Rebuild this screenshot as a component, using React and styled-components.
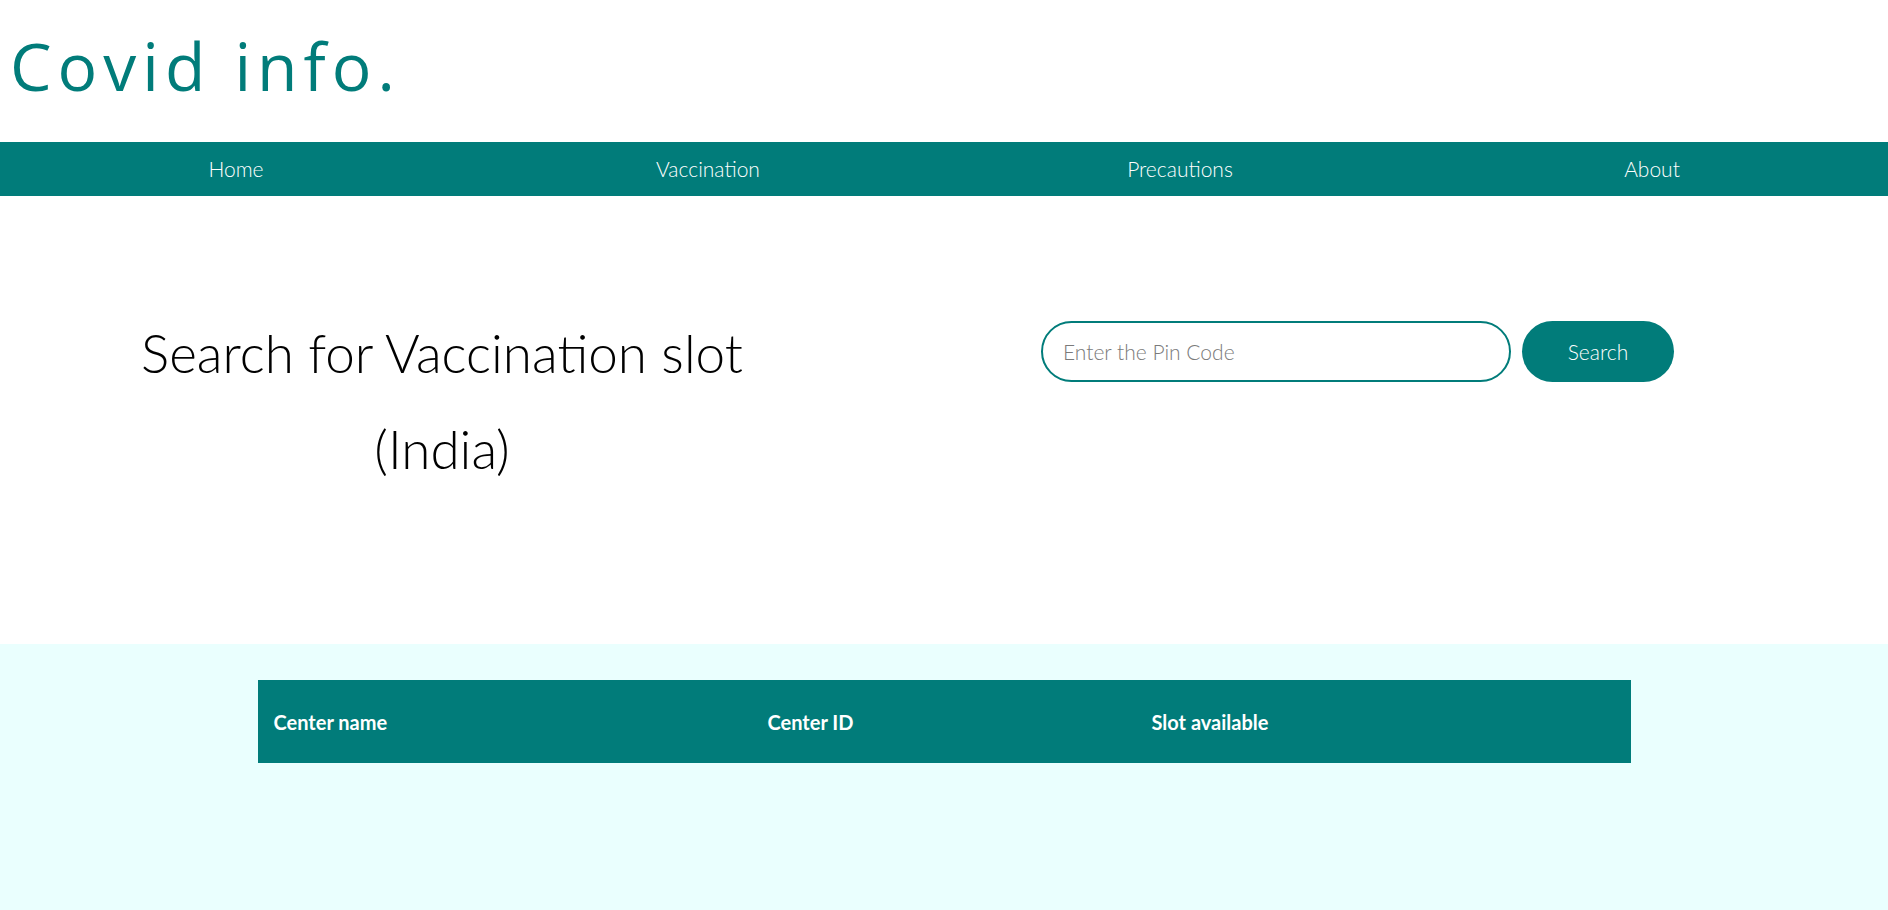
import styled, { createGlobalStyle } from "styled-components";

const teal = "#017c7a";

const GlobalStyle = createGlobalStyle`
  * { box-sizing: border-box; }
  html, body { margin: 0; padding: 0; background: #ffffff; }
  body { font-family: Lato, "Open Sans", sans-serif; }
`;

const Page = styled.div`
  display: flex;
  flex-direction: column;
  min-height: 910px;
`;

const Header = styled.header`
  height: 142px;
  padding: 26px 0 0 10px;
`;

const Logo = styled.h1`
  margin: 0;
  font-family: "Open Sans", sans-serif;
  font-weight: 400;
  font-size: 66px;
  letter-spacing: 6px;
  color: ${teal};
  line-height: 1.2;
`;

const Nav = styled.nav`
  display: flex;
  height: 54px;
  background: ${teal};
`;

const NavItem = styled.a`
  flex: 1;
  display: flex;
  align-items: center;
  justify-content: center;
  padding-bottom: 2px;
  color: #ffffff;
  font-size: 21px;
  font-weight: 300;
  text-decoration: none;
`;

const Hero = styled.section`
  display: flex;
  align-items: flex-start;
  height: 448px;
  padding-top: 109px;
`;

const Heading = styled.h2`
  width: 884px;
  margin: 0;
  text-align: center;
  font-size: 53px;
  font-weight: 300;
  line-height: 96px;
  color: #000000;
`;

const SearchForm = styled.form`
  display: flex;
  gap: 11px;
  margin: 16px 0 0 157px;
`;

const PinInput = styled.input`
  width: 470px;
  height: 61px;
  padding: 0 20px;
  border: 2px solid ${teal};
  border-radius: 31px;
  font-family: Lato, sans-serif;
  font-size: 21px;
  font-weight: 300;
  outline: none;
  &::placeholder { color: #7a7a7a; }
`;

const SearchButton = styled.button`
  width: 152px;
  height: 61px;
  border: none;
  border-radius: 31px;
  background: ${teal};
  color: #ffffff;
  font-family: Lato, sans-serif;
  font-size: 21px;
  font-weight: 300;
  cursor: pointer;
`;

const Results = styled.section`
  flex: 1;
  background: #eafffe;
  padding-top: 36px;
`;

const Table = styled.table`
  width: 1373px;
  margin: 0 auto;
  border-collapse: collapse;
`;

const HeadCell = styled.th`
  width: ${(p) => p.$w}px;
  height: 83px;
  padding: 0 16px;
  background: ${teal};
  color: #ffffff;
  text-align: left;
  font-size: 20px;
  font-weight: 700;
`;

function App() {
  return (
    <Page>
      <GlobalStyle />
      <Header>
        <Logo>Covid info.</Logo>
      </Header>
      <Nav>
        <NavItem href="#">Home</NavItem>
        <NavItem href="#">Vaccination</NavItem>
        <NavItem href="#">Precautions</NavItem>
        <NavItem href="#">About</NavItem>
      </Nav>
      <Hero>
        <Heading>
          Search for Vaccination slot
          <br />
          (India)
        </Heading>
        <SearchForm onSubmit={(e) => e.preventDefault()}>
          <PinInput placeholder="Enter the Pin Code" />
          <SearchButton type="submit">Search</SearchButton>
        </SearchForm>
      </Hero>
      <Results>
        <Table>
          <thead>
            <tr>
              <HeadCell $w={494}>Center name</HeadCell>
              <HeadCell $w={384}>Center ID</HeadCell>
              <HeadCell $w={495}>Slot available</HeadCell>
            </tr>
          </thead>
        </Table>
      </Results>
    </Page>
  );
}

export default App;
